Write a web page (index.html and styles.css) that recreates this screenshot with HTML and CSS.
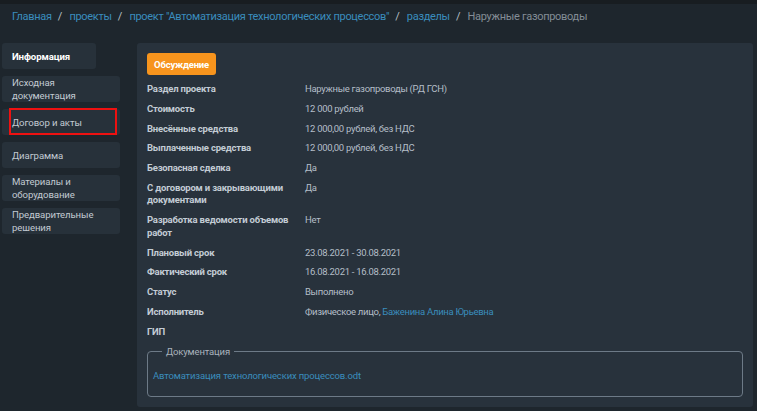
FILE: index.html
```html
<!DOCTYPE html>
<html lang="ru">
<head>
<meta charset="utf-8">
<link rel="stylesheet" href="styles.css">
</head>
<body>
<div class="topstrip"></div>
<nav class="crumbs">
  <a class="crumb" href="#">Главная</a><span class="sep">/</span>
  <a class="crumb" href="#">проекты</a><span class="sep">/</span>
  <a class="crumb" href="#">проект "Автоматизация технологических процессов"</a><span class="sep">/</span>
  <a class="crumb" href="#">разделы</a><span class="sep">/</span>
  <span class="crumb current">Наружные газопроводы</span>
</nav>
<div class="layout">
  <aside class="sidebar">
    <div class="side-item active">Информация</div>
    <div class="side-item wide">Исходная документация</div>
    <div class="side-item wide marked">Договор и акты<span class="mark"></span></div>
    <div class="side-item wide">Диаграмма</div>
    <div class="side-item wide">Материалы и оборудование</div>
    <div class="side-item wide">Предварительные решения</div>
  </aside>
  <main class="card">
    <button class="btn">Обсуждение</button>
    <dl class="info">
      <dt>Раздел проекта</dt><dd>Наружные газопроводы (РД ГСН)</dd>
      <dt>Стоимость</dt><dd>12 000 рублей</dd>
      <dt>Внесённые средства</dt><dd>12 000,00 рублей, без НДС</dd>
      <dt>Выплаченные средства</dt><dd>12 000,00 рублей, без НДС</dd>
      <dt>Безопасная сделка</dt><dd>Да</dd>
      <dt>С договором и закрывающими документами</dt><dd>Да</dd>
      <dt>Разработка ведомости объемов работ</dt><dd>Нет</dd>
      <dt>Плановый срок</dt><dd>23.08.2021 - 30.08.2021</dd>
      <dt>Фактический срок</dt><dd>16.08.2021 - 16.08.2021</dd>
      <dt>Статус</dt><dd>Выполнено</dd>
      <dt>Исполнитель</dt><dd>Физическое лицо, <a class="link" href="#">Баженина Алина Юрьевна</a></dd>
      <dt>ГИП</dt><dd></dd>
    </dl>
    <fieldset class="docs">
      <legend>Документация</legend>
      <a class="link" href="#">Автоматизация технологических процессов.odt</a>
    </fieldset>
  </main>
</div>
</body>
</html>
```
FILE: styles.css
```css
html, body {
  margin: 0;
  padding: 0;
  background: #1e262d;
  font-family: Roboto, "Noto Sans", sans-serif;
  height: 100%;
  overflow: hidden;
}
.topstrip {
  height: 4px;
  background: #181d21;
}
.crumbs {
  padding: 6px 12px 19px;
  font-size: 11px;
  letter-spacing: -0.3px;
  line-height: 14px;
  white-space: nowrap;
}
.crumb {
  color: #3a8dbd;
  text-decoration: none;
}
.crumb.current {
  color: #838d96;
}
.sep {
  color: #b8c0c8;
  margin: 0 5px 0 6px;
}
.layout {
  display: flex;
  gap: 17px;
  padding: 0 4px 0 2px;
}
.sidebar {
  width: 118px;
  flex: none;
  display: flex;
  flex-direction: column;
  gap: 7px;
}
.side-item {
  position: relative;
  height: 26px;
  box-sizing: border-box;
  padding: 0 6px 0 10px;
  display: flex;
  align-items: center;
  background: #27313a;
  border-radius: 3px;
  font-size: 9.6px;
  letter-spacing: -0.1px;
  line-height: 13px;
  color: #c2cad2;
}
.side-item.active {
  width: 94px;
  color: #ffffff;
  font-weight: 700;
}
.mark {
  position: absolute;
  left: 7px;
  right: 3px;
  top: -1px;
  bottom: 0;
  border: 2px solid #ee1111;
}
.card {
  flex: 1;
  background: #28323c;
  border-radius: 3px;
  padding: 10px 10px 10px;
  min-height: 0;
}
.btn {
  display: block;
  width: 69px;
  height: 22px;
  padding: 0;
  border: none;
  border-radius: 3px;
  background: #f7941d;
  color: #ffffff;
  font-family: Roboto, sans-serif;
  font-weight: 700;
  font-size: 9.5px;
  letter-spacing: -0.2px;
}
.info {
  display: grid;
  grid-template-columns: 158px 1fr;
  row-gap: 7.3px;
  margin: 8px 0 0;
  font-size: 9.5px;
  line-height: 12.5px;
}
.info dt {
  font-weight: 700;
  letter-spacing: -0.2px;
  color: #c3ccd5;
  padding-right: 8px;
}
.info dd {
  margin: 0;
  letter-spacing: -0.3px;
  color: #b4bec8;
}
.link {
  color: #3a8dbd;
  text-decoration: none;
}
.docs {
  margin: 7px 0 0;
  border: 1px solid #6d7a87;
  border-radius: 4px;
  padding: 11px 5px 14px;
  font-size: 9.5px;
  letter-spacing: -0.15px;
  line-height: 13px;
}
.docs legend {
  margin-left: 9px;
  padding: 0 4px;
  color: #a9b3bd;
  font-size: 9.5px;
}
```
